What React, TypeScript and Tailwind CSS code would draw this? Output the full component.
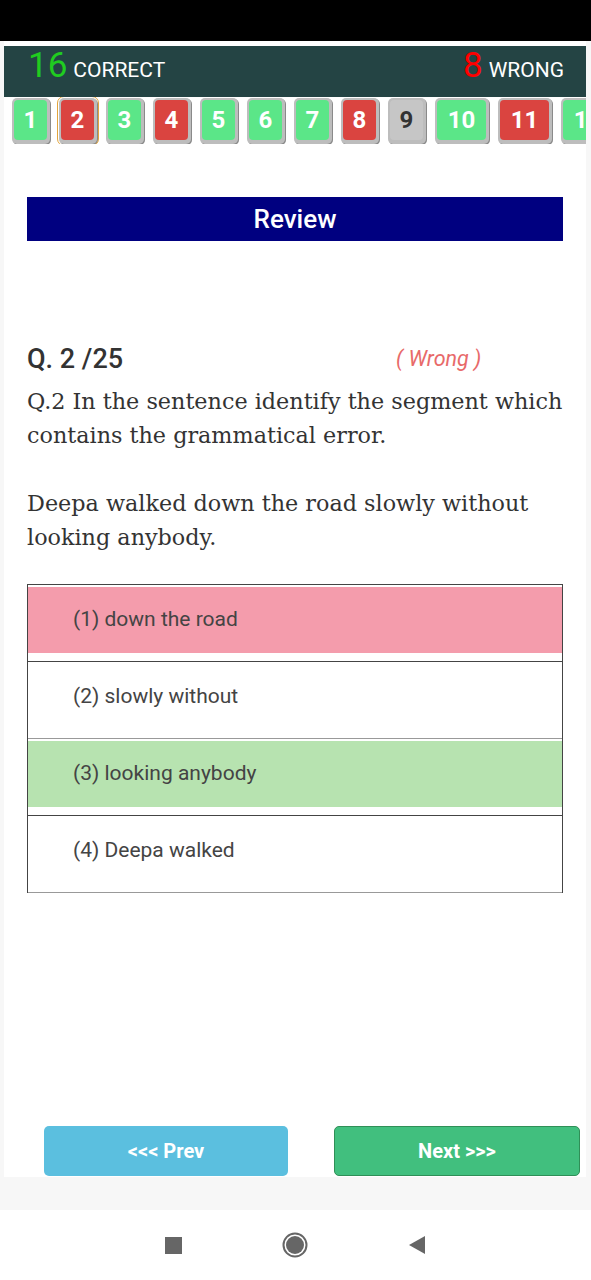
import React from "react";

type Tile = { n: number; state: "right" | "wrong" | "skip" };

const TILES: Tile[] = [
  { n: 1, state: "right" },
  { n: 2, state: "wrong" },
  { n: 3, state: "right" },
  { n: 4, state: "wrong" },
  { n: 5, state: "right" },
  { n: 6, state: "right" },
  { n: 7, state: "right" },
  { n: 8, state: "wrong" },
  { n: 9, state: "skip" },
  { n: 10, state: "right" },
  { n: 11, state: "wrong" },
  { n: 12, state: "right" },
];

const OPTIONS = [
  { label: "(1) down the road", bg: "bg-[#f49cac]", line: "border-[#444]" },
  { label: "(2) slowly without", bg: "bg-white", line: "border-[#999]" },
  { label: "(3) looking anybody", bg: "bg-[#b7e3b0]", line: "border-[#444]" },
  { label: "(4) Deepa walked", bg: "bg-white", line: "border-[#999]" },
];

function NumTile({ tile, current }: { tile: Tile; current: boolean }) {
  const color =
    tile.state === "right"
      ? "bg-[#5be688] text-white"
      : tile.state === "wrong"
        ? "bg-[#da4440] text-white"
        : "bg-[#c6c6c6] text-[#333]";
  return (
    <div
      className={`shrink-0 rounded-[5px] bg-[#bdbdbd] pt-[2px] pl-[2px] pr-[3px] pb-[4px] shadow-[1px_1px_0_#8a8a8a] ${
        current ? "outline outline-1 outline-[#e2a53c] outline-offset-[1px]" : ""
      }`}
    >
      <div
        className={`flex h-[40px] items-center justify-center rounded-[4px] text-[24px] font-bold ${color} ${
          tile.n > 9 ? "w-[49px]" : "w-[33px]"
        }`}
      >
        {tile.n}
      </div>
    </div>
  );
}

export default function App() {
  return (
    <div className="min-h-[1280px] bg-[#f7f7f7] font-['Roboto',sans-serif]">
      <div className="h-[41px] bg-black" />

      <div className="ml-[4px] mr-[5px] flex h-[1136px] flex-col bg-white">
        {/* score header */}
        <div className="mt-[5px] flex h-[51px] items-end justify-between bg-[#244444] pb-[14px] pl-[24px] pr-[22px] text-white">
          <div className="flex items-baseline gap-[6px]">
            <span className="text-[35px] leading-none text-[#20cc20]">16</span>
            <span className="text-[21px] leading-none">CORRECT</span>
          </div>
          <div className="flex items-baseline gap-[6px]">
            <span className="text-[35px] leading-none text-[#ff0000]">8</span>
            <span className="text-[21px] leading-none">WRONG</span>
          </div>
        </div>

        {/* question tiles */}
        <div className="flex gap-[9px] overflow-hidden pl-[8px] pt-[1px]">
          {TILES.map((t) => (
            <NumTile key={t.n} tile={t} current={t.n === 2} />
          ))}
        </div>

        <div className="mx-[23px] mt-[53px] flex h-[44px] items-center justify-center bg-[#000080] text-[26px] font-medium text-white">
          Review
        </div>

        <div className="mx-[23px] mt-[98px] flex items-center">
          <span className="text-[27px] font-medium text-[#333]">Q. 2 /25</span>
          <span className="ml-[273px] text-[21.5px] italic text-[#e86a6a]">( Wrong )</span>
        </div>

        <div className="mx-[23px] mt-[4px] font-['DejaVu_Serif',serif] text-[22.3px] leading-[34px] text-[#333]">
          <p>Q.2 In the sentence identify the segment which contains the grammatical error.</p>
          <p className="mt-[34px]">Deepa walked down the road slowly without looking anybody.</p>
        </div>

        <div className="mx-[23px] mt-[30px] border-l border-r border-t border-[#444]">
          {OPTIONS.map((o) => (
            <div key={o.label} className={`border-b pt-[2px] pb-[8px] ${o.line}`}>
              <div className={`flex h-[66px] items-center pl-[45px] text-[21px] text-[#444] ${o.bg}`}>
                {o.label}
              </div>
            </div>
          ))}
        </div>

        <div className="mt-auto flex justify-between pb-[1px] pl-[40px] pr-[6px]">
          <button className="flex h-[50px] w-[244px] items-center justify-center rounded-[5px] bg-[#5bbfdf] text-[20px] font-bold text-white">
            &lt;&lt;&lt; Prev
          </button>
          <button className="flex h-[50px] w-[246px] items-center justify-center rounded-[5px] border border-[#2f8f57] bg-[#41bf7e] text-[20px] font-bold text-white">
            Next &gt;&gt;&gt;
          </button>
        </div>
      </div>

      {/* system nav bar */}
      <div className="mt-[33px] flex h-[70px] items-center justify-center gap-[100px] bg-white">
        <div className="h-[17px] w-[17px] bg-[#666]" />
        <svg width="26" height="26" viewBox="0 0 26 26">
          <circle cx="13" cy="13" r="11.5" fill="none" stroke="#666" strokeWidth="2" />
          <circle cx="13" cy="13" r="9" fill="#666" />
        </svg>
        <svg width="18" height="20" viewBox="0 0 18 20">
          <path d="M17 1 L17 19 L1 10 Z" fill="#666" />
        </svg>
      </div>
    </div>
  );
}
